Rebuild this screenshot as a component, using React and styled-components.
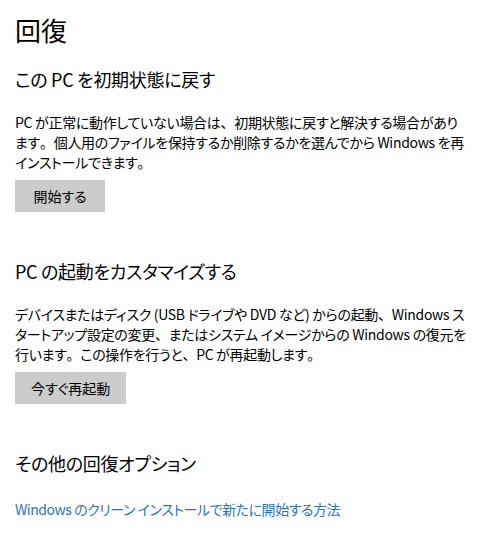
import styled, { createGlobalStyle } from 'styled-components';

const GlobalStyle = createGlobalStyle`
  html, body {
    margin: 0;
    padding: 0;
    background: #ffffff;
  }
  body {
    font-family: "Noto Sans CJK JP", "Noto Sans", sans-serif;
    color: #000000;
    -webkit-font-smoothing: antialiased;
  }
`;

const sections = [
  {
    title: 'この PC を初期状態に戻す',
    lines: [
      'PC が正常に動作していない場合は、初期状態に戻すと解決する場合があり',
      'ます。個人用のファイルを保持するか削除するかを選んでから Windows を再',
      'インストールできます。',
    ],
    button: '開始する',
  },
  {
    title: 'PC の起動をカスタマイズする',
    lines: [
      'デバイスまたはディスク (USB ドライブや DVD など) からの起動、Windows ス',
      'タートアップ設定の変更、またはシステム イメージからの Windows の復元を',
      '行います。この操作を行うと、PC が再起動します。',
    ],
    button: '今すぐ再起動',
  },
];

// keep 、 and 。 at full width while the kana stay proportional
const withPunct = (line) =>
  line.split(/([、。])/).map((part, i) =>
    part === '、' || part === '。' ? <Punct key={i}>{part}</Punct> : part
  );

const App = () => {
  return (
    <Page>
      <GlobalStyle />
      <PageTitle>回復</PageTitle>
      {sections.map((section, index) => (
        <Section key={index}>
          <SectionTitle>{section.title}</SectionTitle>
          <Description>
            {section.lines.map((line, i) => (
              <Line key={i}>{withPunct(line)}</Line>
            ))}
          </Description>
          <ActionButton>{section.button}</ActionButton>
        </Section>
      ))}
      <Section $last>
        <SectionTitle>その他の回復オプション</SectionTitle>
        <HelpLink href="#">Windows のクリーン インストールで新たに開始する方法</HelpLink>
      </Section>
    </Page>
  );
};

export default App;

const Page = styled.div`
  width: 481px;
  min-height: 533px;
  box-sizing: border-box;
  padding: 12px 15px 0 15px;
  font-feature-settings: "palt";
`;

const PageTitle = styled.h1`
  margin: 0;
  font-size: 26px;
  font-weight: 400;
  line-height: 36px;
`;

const Section = styled.section`
  display: flex;
  flex-direction: column;
  align-items: flex-start;
  margin-top: 18px;

  & + & {
    margin-top: ${props => (props.$last ? '46px' : '44px')};
  }
`;

const SectionTitle = styled.h2`
  margin: 0;
  font-size: 18px;
  font-weight: 400;
  line-height: 26px;
  letter-spacing: -0.3px;
`;

const Description = styled.p`
  margin: 20px 0 0 0;
  font-size: 14px;
  line-height: 20px;
  letter-spacing: -0.3px;
  white-space: nowrap;
`;

const Line = styled.span`
  display: block;
`;

const Punct = styled.span`
  font-feature-settings: normal;
`;

const ActionButton = styled.button`
  margin-top: 8px;
  min-width: 90px;
  height: 32px;
  padding: 0 16px;
  border: none;
  background: #cccccc;
  font-family: inherit;
  font-feature-settings: "palt";
  font-size: 14px;
  color: #000;
  cursor: pointer;
`;

const HelpLink = styled.a`
  margin-top: 23px;
  font-size: 14px;
  line-height: 20px;
  letter-spacing: -0.45px;
  color: #2f74b9;
  text-decoration: none;
`;
